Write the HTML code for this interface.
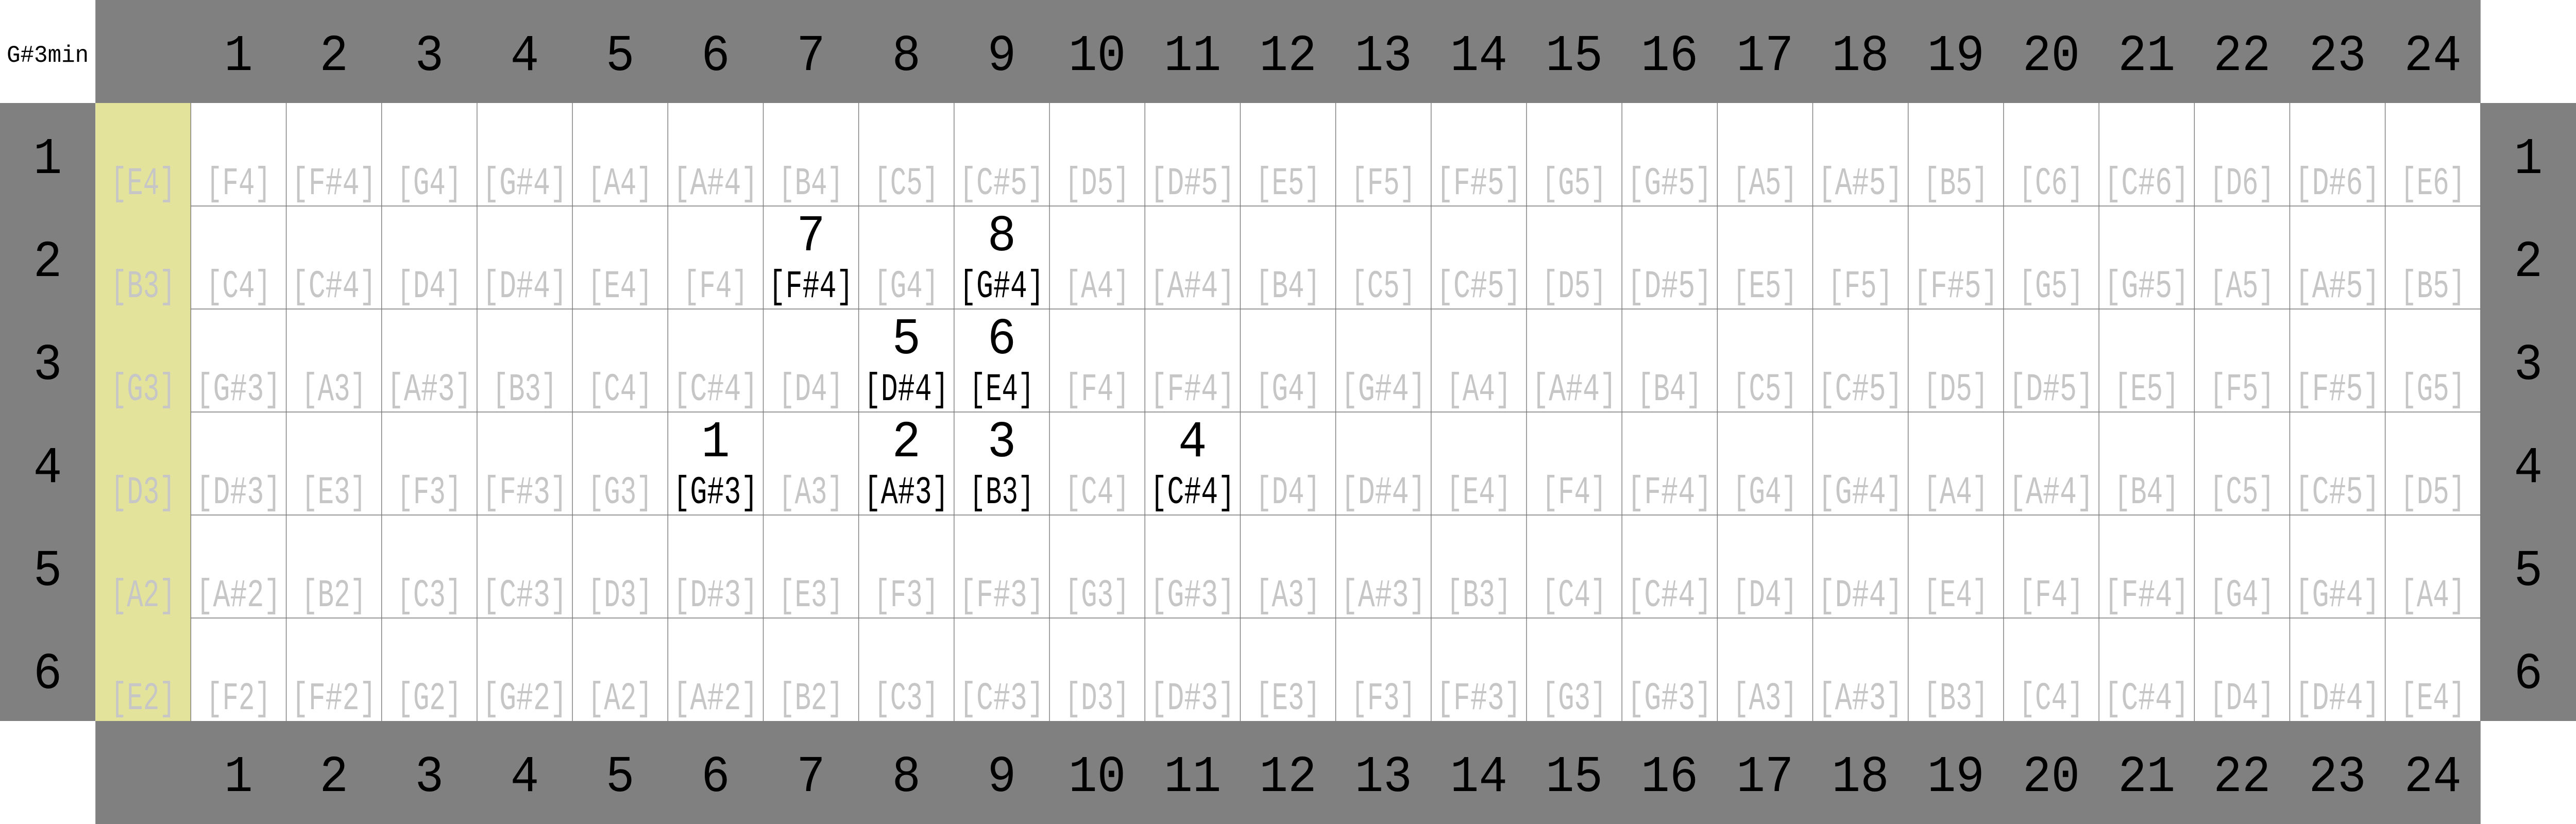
<!DOCTYPE html>
<html><head><meta charset="utf-8"><style>
html,body{margin:0;padding:0;background:#fff;width:100vw;height:100vh;overflow:hidden}
svg{display:block;width:100vw;height:100vh}
text{font-family:"Liberation Mono",monospace;text-anchor:middle}
.n{font-size:76px;fill:#c6c6c6}
.b{fill:#000}
.big{font-size:100px;fill:#000}
</style></head><body>
<svg viewBox="0 0 5400 1600" preserveAspectRatio="none" xmlns="http://www.w3.org/2000/svg">
<rect x="0" y="0" width="5400" height="1600" fill="#fff"/>
<rect x="200" y="0" width="5000" height="200" fill="#808080"/>
<rect x="200" y="1400" width="5000" height="200" fill="#808080"/>
<rect x="0" y="200" width="200" height="1200" fill="#808080"/>
<rect x="5200" y="200" width="200" height="1200" fill="#808080"/>
<rect x="200" y="200" width="200" height="1200" fill="#e3e39b"/>
<g stroke="#777" stroke-width="1.5">
<path d="M400 200V1400M600 200V1400M800 200V1400M1000 200V1400M1200 200V1400M1400 200V1400M1600 200V1400M1800 200V1400M2000 200V1400M2200 200V1400M2400 200V1400M2600 200V1400M2800 200V1400M3000 200V1400M3200 200V1400M3400 200V1400M3600 200V1400M3800 200V1400M4000 200V1400M4200 200V1400M4400 200V1400M4600 200V1400M4800 200V1400M5000 200V1400M5200 200V1400"/>
<path d="M400 400H5200M400 600H5200M400 800H5200M400 1000H5200M400 1200H5200"/>
</g>
<text x="100" y="120" font-size="46" textLength="172" lengthAdjust="spacingAndGlyphs">G#3min</text>
<g class="big">
<text class="big" x="500" y="136">1</text><text class="big" x="700" y="136">2</text><text class="big" x="900" y="136">3</text><text class="big" x="1100" y="136">4</text><text class="big" x="1300" y="136">5</text><text class="big" x="1500" y="136">6</text><text class="big" x="1700" y="136">7</text><text class="big" x="1900" y="136">8</text><text class="big" x="2100" y="136">9</text><text class="big" x="2300" y="136">10</text><text class="big" x="2500" y="136">11</text><text class="big" x="2700" y="136">12</text><text class="big" x="2900" y="136">13</text><text class="big" x="3100" y="136">14</text><text class="big" x="3300" y="136">15</text><text class="big" x="3500" y="136">16</text><text class="big" x="3700" y="136">17</text><text class="big" x="3900" y="136">18</text><text class="big" x="4100" y="136">19</text><text class="big" x="4300" y="136">20</text><text class="big" x="4500" y="136">21</text><text class="big" x="4700" y="136">22</text><text class="big" x="4900" y="136">23</text><text class="big" x="5100" y="136">24</text>
<text class="big" x="500" y="1536">1</text><text class="big" x="700" y="1536">2</text><text class="big" x="900" y="1536">3</text><text class="big" x="1100" y="1536">4</text><text class="big" x="1300" y="1536">5</text><text class="big" x="1500" y="1536">6</text><text class="big" x="1700" y="1536">7</text><text class="big" x="1900" y="1536">8</text><text class="big" x="2100" y="1536">9</text><text class="big" x="2300" y="1536">10</text><text class="big" x="2500" y="1536">11</text><text class="big" x="2700" y="1536">12</text><text class="big" x="2900" y="1536">13</text><text class="big" x="3100" y="1536">14</text><text class="big" x="3300" y="1536">15</text><text class="big" x="3500" y="1536">16</text><text class="big" x="3700" y="1536">17</text><text class="big" x="3900" y="1536">18</text><text class="big" x="4100" y="1536">19</text><text class="big" x="4300" y="1536">20</text><text class="big" x="4500" y="1536">21</text><text class="big" x="4700" y="1536">22</text><text class="big" x="4900" y="1536">23</text><text class="big" x="5100" y="1536">24</text>
<text class="big" x="100" y="336">1</text><text class="big" x="100" y="536">2</text><text class="big" x="100" y="736">3</text><text class="big" x="100" y="936">4</text><text class="big" x="100" y="1136">5</text><text class="big" x="100" y="1336">6</text>
<text class="big" x="5300" y="336">1</text><text class="big" x="5300" y="536">2</text><text class="big" x="5300" y="736">3</text><text class="big" x="5300" y="936">4</text><text class="big" x="5300" y="1136">5</text><text class="big" x="5300" y="1336">6</text>
<text class="big" x="1700" y="486">7</text><text class="big" x="2100" y="486">8</text>
<text class="big" x="1900" y="686">5</text><text class="big" x="2100" y="686">6</text>
<text class="big" x="1500" y="886">1</text><text class="big" x="1900" y="886">2</text><text class="big" x="2100" y="886">3</text><text class="big" x="2500" y="886">4</text>
</g>

<!-- string 1 -->
<text class="n" x="300" y="377" textLength="136" lengthAdjust="spacingAndGlyphs">[E4]</text>
<text class="n" x="500" y="377" textLength="136" lengthAdjust="spacingAndGlyphs">[F4]</text>
<text class="n" x="700" y="377" textLength="178" lengthAdjust="spacingAndGlyphs">[F#4]</text>
<text class="n" x="900" y="377" textLength="136" lengthAdjust="spacingAndGlyphs">[G4]</text>
<text class="n" x="1100" y="377" textLength="178" lengthAdjust="spacingAndGlyphs">[G#4]</text>
<text class="n" x="1300" y="377" textLength="136" lengthAdjust="spacingAndGlyphs">[A4]</text>
<text class="n" x="1500" y="377" textLength="178" lengthAdjust="spacingAndGlyphs">[A#4]</text>
<text class="n" x="1700" y="377" textLength="136" lengthAdjust="spacingAndGlyphs">[B4]</text>
<text class="n" x="1900" y="377" textLength="136" lengthAdjust="spacingAndGlyphs">[C5]</text>
<text class="n" x="2100" y="377" textLength="178" lengthAdjust="spacingAndGlyphs">[C#5]</text>
<text class="n" x="2300" y="377" textLength="136" lengthAdjust="spacingAndGlyphs">[D5]</text>
<text class="n" x="2500" y="377" textLength="178" lengthAdjust="spacingAndGlyphs">[D#5]</text>
<text class="n" x="2700" y="377" textLength="136" lengthAdjust="spacingAndGlyphs">[E5]</text>
<text class="n" x="2900" y="377" textLength="136" lengthAdjust="spacingAndGlyphs">[F5]</text>
<text class="n" x="3100" y="377" textLength="178" lengthAdjust="spacingAndGlyphs">[F#5]</text>
<text class="n" x="3300" y="377" textLength="136" lengthAdjust="spacingAndGlyphs">[G5]</text>
<text class="n" x="3500" y="377" textLength="178" lengthAdjust="spacingAndGlyphs">[G#5]</text>
<text class="n" x="3700" y="377" textLength="136" lengthAdjust="spacingAndGlyphs">[A5]</text>
<text class="n" x="3900" y="377" textLength="178" lengthAdjust="spacingAndGlyphs">[A#5]</text>
<text class="n" x="4100" y="377" textLength="136" lengthAdjust="spacingAndGlyphs">[B5]</text>
<text class="n" x="4300" y="377" textLength="136" lengthAdjust="spacingAndGlyphs">[C6]</text>
<text class="n" x="4500" y="377" textLength="178" lengthAdjust="spacingAndGlyphs">[C#6]</text>
<text class="n" x="4700" y="377" textLength="136" lengthAdjust="spacingAndGlyphs">[D6]</text>
<text class="n" x="4900" y="377" textLength="178" lengthAdjust="spacingAndGlyphs">[D#6]</text>
<text class="n" x="5100" y="377" textLength="136" lengthAdjust="spacingAndGlyphs">[E6]</text>

<!-- string 2 -->
<text class="n" x="300" y="577" textLength="136" lengthAdjust="spacingAndGlyphs">[B3]</text>
<text class="n" x="500" y="577" textLength="136" lengthAdjust="spacingAndGlyphs">[C4]</text>
<text class="n" x="700" y="577" textLength="178" lengthAdjust="spacingAndGlyphs">[C#4]</text>
<text class="n" x="900" y="577" textLength="136" lengthAdjust="spacingAndGlyphs">[D4]</text>
<text class="n" x="1100" y="577" textLength="178" lengthAdjust="spacingAndGlyphs">[D#4]</text>
<text class="n" x="1300" y="577" textLength="136" lengthAdjust="spacingAndGlyphs">[E4]</text>
<text class="n" x="1500" y="577" textLength="136" lengthAdjust="spacingAndGlyphs">[F4]</text>
<text class="n b" x="1700" y="577" textLength="178" lengthAdjust="spacingAndGlyphs">[F#4]</text>
<text class="n" x="1900" y="577" textLength="136" lengthAdjust="spacingAndGlyphs">[G4]</text>
<text class="n b" x="2100" y="577" textLength="178" lengthAdjust="spacingAndGlyphs">[G#4]</text>
<text class="n" x="2300" y="577" textLength="136" lengthAdjust="spacingAndGlyphs">[A4]</text>
<text class="n" x="2500" y="577" textLength="178" lengthAdjust="spacingAndGlyphs">[A#4]</text>
<text class="n" x="2700" y="577" textLength="136" lengthAdjust="spacingAndGlyphs">[B4]</text>
<text class="n" x="2900" y="577" textLength="136" lengthAdjust="spacingAndGlyphs">[C5]</text>
<text class="n" x="3100" y="577" textLength="178" lengthAdjust="spacingAndGlyphs">[C#5]</text>
<text class="n" x="3300" y="577" textLength="136" lengthAdjust="spacingAndGlyphs">[D5]</text>
<text class="n" x="3500" y="577" textLength="178" lengthAdjust="spacingAndGlyphs">[D#5]</text>
<text class="n" x="3700" y="577" textLength="136" lengthAdjust="spacingAndGlyphs">[E5]</text>
<text class="n" x="3900" y="577" textLength="136" lengthAdjust="spacingAndGlyphs">[F5]</text>
<text class="n" x="4100" y="577" textLength="178" lengthAdjust="spacingAndGlyphs">[F#5]</text>
<text class="n" x="4300" y="577" textLength="136" lengthAdjust="spacingAndGlyphs">[G5]</text>
<text class="n" x="4500" y="577" textLength="178" lengthAdjust="spacingAndGlyphs">[G#5]</text>
<text class="n" x="4700" y="577" textLength="136" lengthAdjust="spacingAndGlyphs">[A5]</text>
<text class="n" x="4900" y="577" textLength="178" lengthAdjust="spacingAndGlyphs">[A#5]</text>
<text class="n" x="5100" y="577" textLength="136" lengthAdjust="spacingAndGlyphs">[B5]</text>

<!-- string 3 -->
<text class="n" x="300" y="777" textLength="136" lengthAdjust="spacingAndGlyphs">[G3]</text>
<text class="n" x="500" y="777" textLength="178" lengthAdjust="spacingAndGlyphs">[G#3]</text>
<text class="n" x="700" y="777" textLength="136" lengthAdjust="spacingAndGlyphs">[A3]</text>
<text class="n" x="900" y="777" textLength="178" lengthAdjust="spacingAndGlyphs">[A#3]</text>
<text class="n" x="1100" y="777" textLength="136" lengthAdjust="spacingAndGlyphs">[B3]</text>
<text class="n" x="1300" y="777" textLength="136" lengthAdjust="spacingAndGlyphs">[C4]</text>
<text class="n" x="1500" y="777" textLength="178" lengthAdjust="spacingAndGlyphs">[C#4]</text>
<text class="n" x="1700" y="777" textLength="136" lengthAdjust="spacingAndGlyphs">[D4]</text>
<text class="n b" x="1900" y="777" textLength="178" lengthAdjust="spacingAndGlyphs">[D#4]</text>
<text class="n b" x="2100" y="777" textLength="136" lengthAdjust="spacingAndGlyphs">[E4]</text>
<text class="n" x="2300" y="777" textLength="136" lengthAdjust="spacingAndGlyphs">[F4]</text>
<text class="n" x="2500" y="777" textLength="178" lengthAdjust="spacingAndGlyphs">[F#4]</text>
<text class="n" x="2700" y="777" textLength="136" lengthAdjust="spacingAndGlyphs">[G4]</text>
<text class="n" x="2900" y="777" textLength="178" lengthAdjust="spacingAndGlyphs">[G#4]</text>
<text class="n" x="3100" y="777" textLength="136" lengthAdjust="spacingAndGlyphs">[A4]</text>
<text class="n" x="3300" y="777" textLength="178" lengthAdjust="spacingAndGlyphs">[A#4]</text>
<text class="n" x="3500" y="777" textLength="136" lengthAdjust="spacingAndGlyphs">[B4]</text>
<text class="n" x="3700" y="777" textLength="136" lengthAdjust="spacingAndGlyphs">[C5]</text>
<text class="n" x="3900" y="777" textLength="178" lengthAdjust="spacingAndGlyphs">[C#5]</text>
<text class="n" x="4100" y="777" textLength="136" lengthAdjust="spacingAndGlyphs">[D5]</text>
<text class="n" x="4300" y="777" textLength="178" lengthAdjust="spacingAndGlyphs">[D#5]</text>
<text class="n" x="4500" y="777" textLength="136" lengthAdjust="spacingAndGlyphs">[E5]</text>
<text class="n" x="4700" y="777" textLength="136" lengthAdjust="spacingAndGlyphs">[F5]</text>
<text class="n" x="4900" y="777" textLength="178" lengthAdjust="spacingAndGlyphs">[F#5]</text>
<text class="n" x="5100" y="777" textLength="136" lengthAdjust="spacingAndGlyphs">[G5]</text>

<!-- string 4 -->
<text class="n" x="300" y="977" textLength="136" lengthAdjust="spacingAndGlyphs">[D3]</text>
<text class="n" x="500" y="977" textLength="178" lengthAdjust="spacingAndGlyphs">[D#3]</text>
<text class="n" x="700" y="977" textLength="136" lengthAdjust="spacingAndGlyphs">[E3]</text>
<text class="n" x="900" y="977" textLength="136" lengthAdjust="spacingAndGlyphs">[F3]</text>
<text class="n" x="1100" y="977" textLength="178" lengthAdjust="spacingAndGlyphs">[F#3]</text>
<text class="n" x="1300" y="977" textLength="136" lengthAdjust="spacingAndGlyphs">[G3]</text>
<text class="n b" x="1500" y="977" textLength="178" lengthAdjust="spacingAndGlyphs">[G#3]</text>
<text class="n" x="1700" y="977" textLength="136" lengthAdjust="spacingAndGlyphs">[A3]</text>
<text class="n b" x="1900" y="977" textLength="178" lengthAdjust="spacingAndGlyphs">[A#3]</text>
<text class="n b" x="2100" y="977" textLength="136" lengthAdjust="spacingAndGlyphs">[B3]</text>
<text class="n" x="2300" y="977" textLength="136" lengthAdjust="spacingAndGlyphs">[C4]</text>
<text class="n b" x="2500" y="977" textLength="178" lengthAdjust="spacingAndGlyphs">[C#4]</text>
<text class="n" x="2700" y="977" textLength="136" lengthAdjust="spacingAndGlyphs">[D4]</text>
<text class="n" x="2900" y="977" textLength="178" lengthAdjust="spacingAndGlyphs">[D#4]</text>
<text class="n" x="3100" y="977" textLength="136" lengthAdjust="spacingAndGlyphs">[E4]</text>
<text class="n" x="3300" y="977" textLength="136" lengthAdjust="spacingAndGlyphs">[F4]</text>
<text class="n" x="3500" y="977" textLength="178" lengthAdjust="spacingAndGlyphs">[F#4]</text>
<text class="n" x="3700" y="977" textLength="136" lengthAdjust="spacingAndGlyphs">[G4]</text>
<text class="n" x="3900" y="977" textLength="178" lengthAdjust="spacingAndGlyphs">[G#4]</text>
<text class="n" x="4100" y="977" textLength="136" lengthAdjust="spacingAndGlyphs">[A4]</text>
<text class="n" x="4300" y="977" textLength="178" lengthAdjust="spacingAndGlyphs">[A#4]</text>
<text class="n" x="4500" y="977" textLength="136" lengthAdjust="spacingAndGlyphs">[B4]</text>
<text class="n" x="4700" y="977" textLength="136" lengthAdjust="spacingAndGlyphs">[C5]</text>
<text class="n" x="4900" y="977" textLength="178" lengthAdjust="spacingAndGlyphs">[C#5]</text>
<text class="n" x="5100" y="977" textLength="136" lengthAdjust="spacingAndGlyphs">[D5]</text>

<!-- string 5 -->
<text class="n" x="300" y="1177" textLength="136" lengthAdjust="spacingAndGlyphs">[A2]</text>
<text class="n" x="500" y="1177" textLength="178" lengthAdjust="spacingAndGlyphs">[A#2]</text>
<text class="n" x="700" y="1177" textLength="136" lengthAdjust="spacingAndGlyphs">[B2]</text>
<text class="n" x="900" y="1177" textLength="136" lengthAdjust="spacingAndGlyphs">[C3]</text>
<text class="n" x="1100" y="1177" textLength="178" lengthAdjust="spacingAndGlyphs">[C#3]</text>
<text class="n" x="1300" y="1177" textLength="136" lengthAdjust="spacingAndGlyphs">[D3]</text>
<text class="n" x="1500" y="1177" textLength="178" lengthAdjust="spacingAndGlyphs">[D#3]</text>
<text class="n" x="1700" y="1177" textLength="136" lengthAdjust="spacingAndGlyphs">[E3]</text>
<text class="n" x="1900" y="1177" textLength="136" lengthAdjust="spacingAndGlyphs">[F3]</text>
<text class="n" x="2100" y="1177" textLength="178" lengthAdjust="spacingAndGlyphs">[F#3]</text>
<text class="n" x="2300" y="1177" textLength="136" lengthAdjust="spacingAndGlyphs">[G3]</text>
<text class="n" x="2500" y="1177" textLength="178" lengthAdjust="spacingAndGlyphs">[G#3]</text>
<text class="n" x="2700" y="1177" textLength="136" lengthAdjust="spacingAndGlyphs">[A3]</text>
<text class="n" x="2900" y="1177" textLength="178" lengthAdjust="spacingAndGlyphs">[A#3]</text>
<text class="n" x="3100" y="1177" textLength="136" lengthAdjust="spacingAndGlyphs">[B3]</text>
<text class="n" x="3300" y="1177" textLength="136" lengthAdjust="spacingAndGlyphs">[C4]</text>
<text class="n" x="3500" y="1177" textLength="178" lengthAdjust="spacingAndGlyphs">[C#4]</text>
<text class="n" x="3700" y="1177" textLength="136" lengthAdjust="spacingAndGlyphs">[D4]</text>
<text class="n" x="3900" y="1177" textLength="178" lengthAdjust="spacingAndGlyphs">[D#4]</text>
<text class="n" x="4100" y="1177" textLength="136" lengthAdjust="spacingAndGlyphs">[E4]</text>
<text class="n" x="4300" y="1177" textLength="136" lengthAdjust="spacingAndGlyphs">[F4]</text>
<text class="n" x="4500" y="1177" textLength="178" lengthAdjust="spacingAndGlyphs">[F#4]</text>
<text class="n" x="4700" y="1177" textLength="136" lengthAdjust="spacingAndGlyphs">[G4]</text>
<text class="n" x="4900" y="1177" textLength="178" lengthAdjust="spacingAndGlyphs">[G#4]</text>
<text class="n" x="5100" y="1177" textLength="136" lengthAdjust="spacingAndGlyphs">[A4]</text>

<!-- string 6 -->
<text class="n" x="300" y="1377" textLength="136" lengthAdjust="spacingAndGlyphs">[E2]</text>
<text class="n" x="500" y="1377" textLength="136" lengthAdjust="spacingAndGlyphs">[F2]</text>
<text class="n" x="700" y="1377" textLength="178" lengthAdjust="spacingAndGlyphs">[F#2]</text>
<text class="n" x="900" y="1377" textLength="136" lengthAdjust="spacingAndGlyphs">[G2]</text>
<text class="n" x="1100" y="1377" textLength="178" lengthAdjust="spacingAndGlyphs">[G#2]</text>
<text class="n" x="1300" y="1377" textLength="136" lengthAdjust="spacingAndGlyphs">[A2]</text>
<text class="n" x="1500" y="1377" textLength="178" lengthAdjust="spacingAndGlyphs">[A#2]</text>
<text class="n" x="1700" y="1377" textLength="136" lengthAdjust="spacingAndGlyphs">[B2]</text>
<text class="n" x="1900" y="1377" textLength="136" lengthAdjust="spacingAndGlyphs">[C3]</text>
<text class="n" x="2100" y="1377" textLength="178" lengthAdjust="spacingAndGlyphs">[C#3]</text>
<text class="n" x="2300" y="1377" textLength="136" lengthAdjust="spacingAndGlyphs">[D3]</text>
<text class="n" x="2500" y="1377" textLength="178" lengthAdjust="spacingAndGlyphs">[D#3]</text>
<text class="n" x="2700" y="1377" textLength="136" lengthAdjust="spacingAndGlyphs">[E3]</text>
<text class="n" x="2900" y="1377" textLength="136" lengthAdjust="spacingAndGlyphs">[F3]</text>
<text class="n" x="3100" y="1377" textLength="178" lengthAdjust="spacingAndGlyphs">[F#3]</text>
<text class="n" x="3300" y="1377" textLength="136" lengthAdjust="spacingAndGlyphs">[G3]</text>
<text class="n" x="3500" y="1377" textLength="178" lengthAdjust="spacingAndGlyphs">[G#3]</text>
<text class="n" x="3700" y="1377" textLength="136" lengthAdjust="spacingAndGlyphs">[A3]</text>
<text class="n" x="3900" y="1377" textLength="178" lengthAdjust="spacingAndGlyphs">[A#3]</text>
<text class="n" x="4100" y="1377" textLength="136" lengthAdjust="spacingAndGlyphs">[B3]</text>
<text class="n" x="4300" y="1377" textLength="136" lengthAdjust="spacingAndGlyphs">[C4]</text>
<text class="n" x="4500" y="1377" textLength="178" lengthAdjust="spacingAndGlyphs">[C#4]</text>
<text class="n" x="4700" y="1377" textLength="136" lengthAdjust="spacingAndGlyphs">[D4]</text>
<text class="n" x="4900" y="1377" textLength="178" lengthAdjust="spacingAndGlyphs">[D#4]</text>
<text class="n" x="5100" y="1377" textLength="136" lengthAdjust="spacingAndGlyphs">[E4]</text>
</svg>
</body></html>
